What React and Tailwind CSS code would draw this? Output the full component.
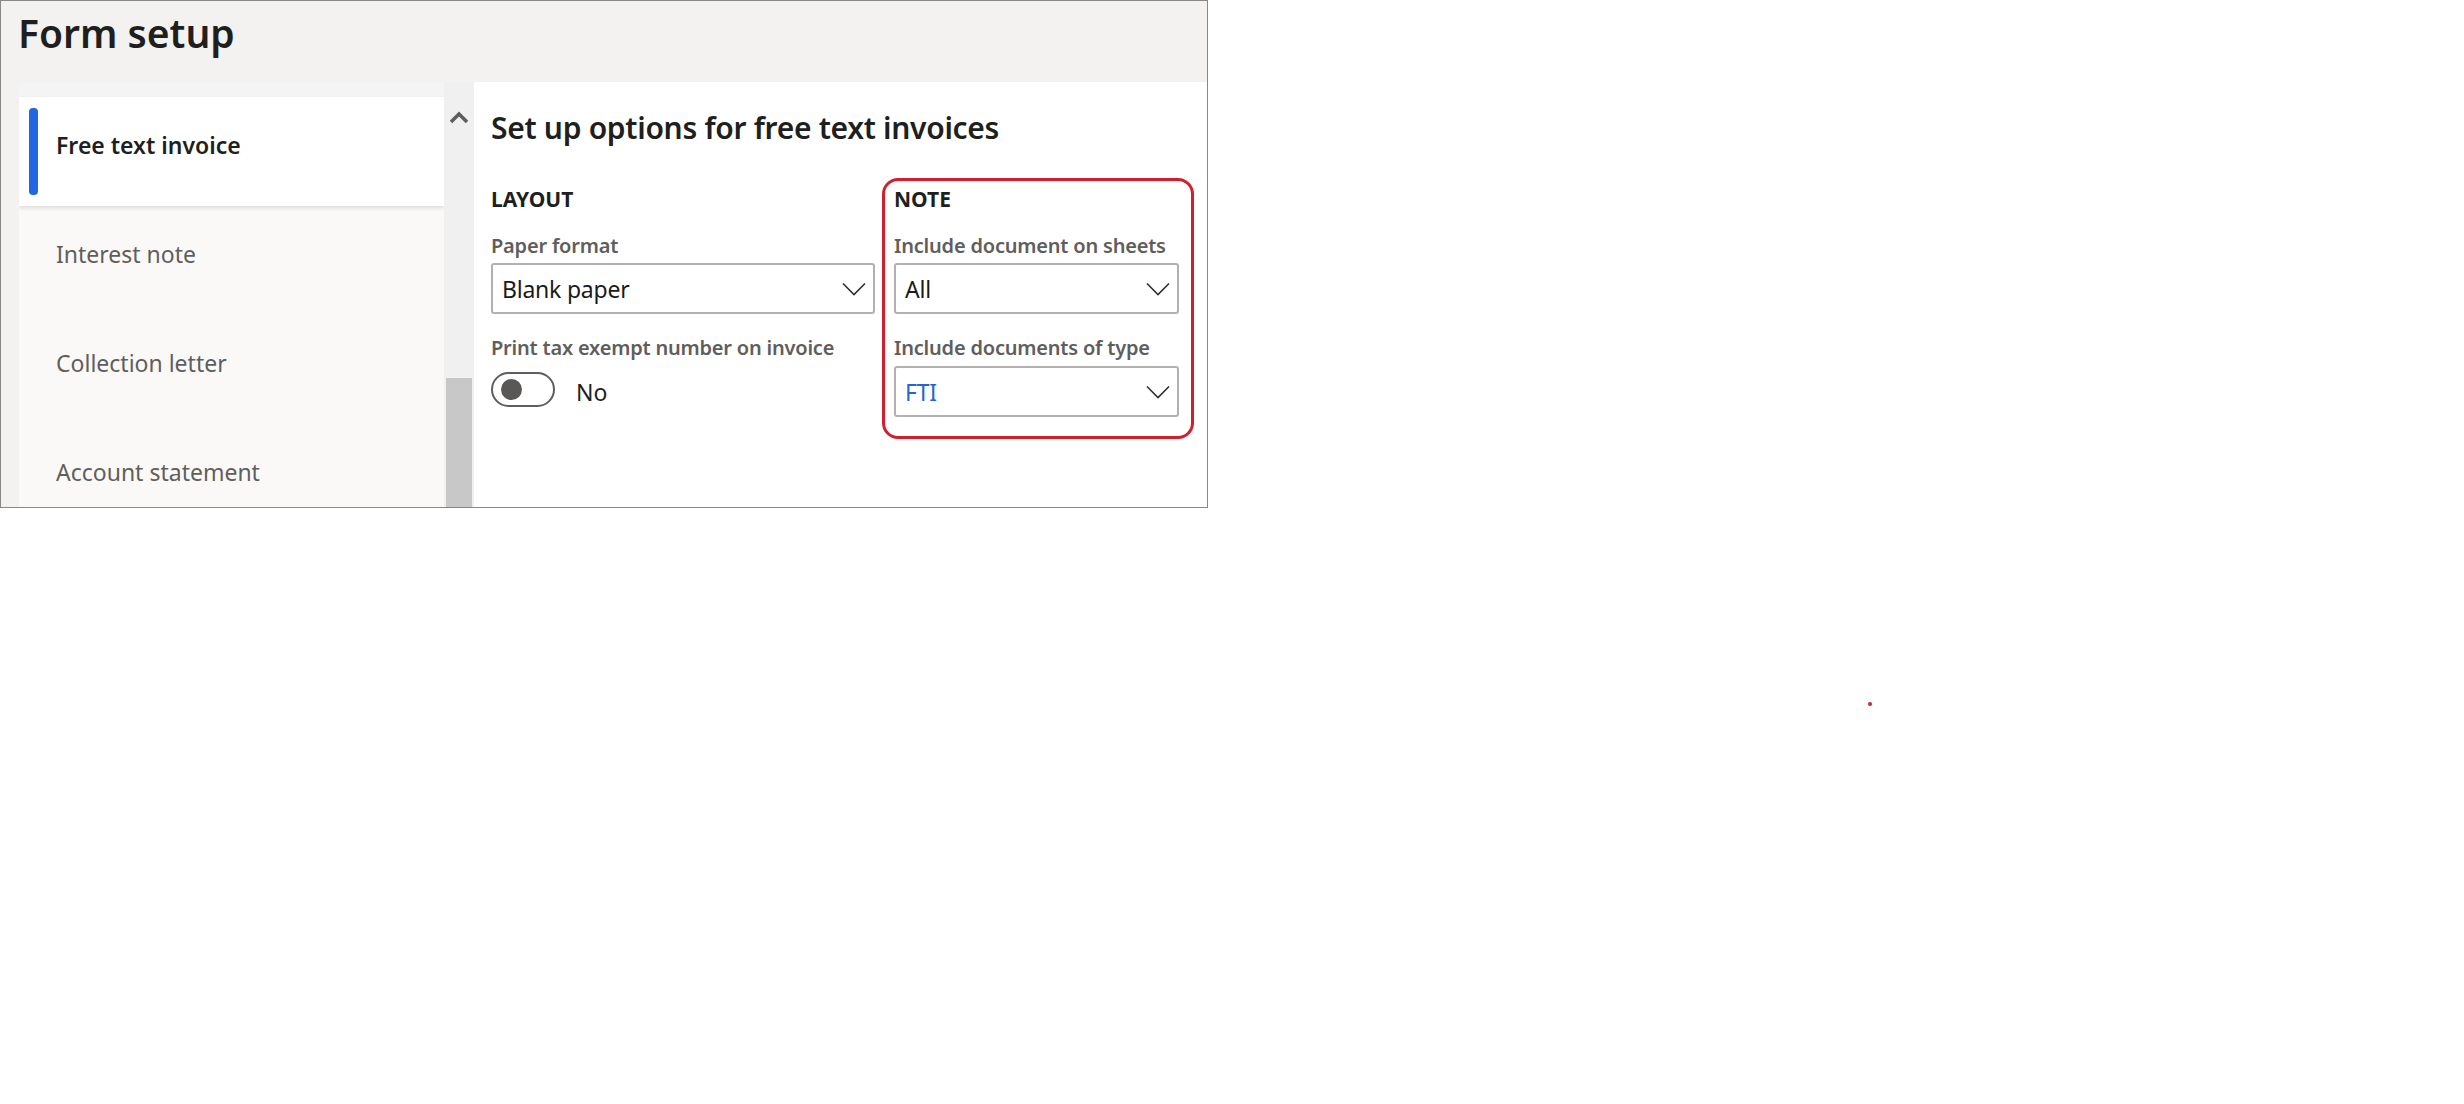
const font = { fontFamily: '"Segoe UI", "Noto Sans", "Open Sans", sans-serif' }

const navItems = ['Interest note', 'Collection letter', 'Account statement']

function Chevron() {
  return (
    <svg width="24" height="14" viewBox="0 0 24 14" fill="none" className="shrink-0">
      <polyline points="1,1.5 12,12.5 23,1.5" stroke="#323130" strokeWidth="1.6" />
    </svg>
  )
}

function Select({ value, blue }) {
  return (
    <div className="flex h-[51px] items-center justify-between rounded-[3px] border-2 border-[#b3b0ad] bg-white pl-[9px] pr-[7px]">
      <span className={`pt-[2px] text-[23px] tracking-[-0.01em] ${blue ? 'text-[#2266d0]' : 'text-[#1b1a19]'}`}>{value}</span>
      <Chevron />
    </div>
  )
}

export default function App() {
  return (
    <div className="relative h-[1104px] w-[2464px] bg-white" style={font}>
      <div className="flex h-[508px] w-[1208px] flex-col border border-[#8a8886] bg-[#f3f2f1]">
        <div className="h-[81px] shrink-0 pl-[17px] pt-[7px]">
          <h1 className="text-[39px] font-semibold leading-[50px] text-[#201f1e]">Form setup</h1>
        </div>
        <div className="flex min-h-0 flex-1 pl-[18px]">
          <div className="flex w-[425px] flex-col overflow-hidden bg-[#f4f4f4]">
            <div className="h-[15px] shrink-0" />
            <div className="relative z-10 flex h-[109px] shrink-0 items-center bg-white shadow-[0_2px_4px_rgba(0,0,0,0.12)]">
              <div className="ml-[10px] h-[87px] w-[9px] rounded-[4px] bg-[#2266e3]" />
              <span className="ml-[18px] pb-[12px] text-[23px] font-semibold text-[#201f1e]">Free text invoice</span>
            </div>
            <div className="flex-1 bg-[#faf9f8]">
              {navItems.map((item) => (
                <div key={item} className="flex h-[109px] items-center pb-[12px] pl-[37px] text-[23px] text-[#605e5c]">
                  {item}
                </div>
              ))}
            </div>
          </div>
          <div className="flex w-[30px] flex-col bg-[#f0f0f0]">
            <div className="flex justify-center pt-[26px]">
              <svg width="20" height="20" viewBox="0 0 20 20" fill="none">
                <polyline points="2,14 10,6 18,14" stroke="#605e5c" strokeWidth="3.6" />
              </svg>
            </div>
            <div className="mx-[2px] mt-[250px] flex-1 bg-[#c8c8c8]" />
          </div>
          <div className="flex-1 bg-white pl-[17px] pr-[12px] pt-[26px]">
            <h2 className="text-[30px] font-semibold leading-[40px] tracking-[-0.01em] text-[#201f1e]">Set up options for free text invoices</h2>
            <div className="mt-[30px] flex items-start gap-[7px]">
              <div className="w-[384px] pt-[8px]">
                <p className="mb-[21px] text-[21px] font-bold leading-[26px] text-[#201f1e]">LAYOUT</p>
                <p className="mb-[4px] text-[20px] font-semibold leading-[26px] tracking-[-0.01em] text-[#605e5c]">Paper format</p>
                <Select value="Blank paper" />
                <p className="mb-[11px] mt-[21px] text-[20px] font-semibold leading-[26px] tracking-[-0.01em] text-[#605e5c]">Print tax exempt number on invoice</p>
                <div className="flex items-center">
                  <div className="flex h-[35px] w-[64px] items-center rounded-full border-2 border-[#605e5c] pl-[8px]">
                    <div className="h-[21px] w-[21px] rounded-full bg-[#5a5857]" />
                  </div>
                  <span className="ml-[21px] translate-y-[3px] text-[23px] text-[#201f1e]">No</span>
                </div>
              </div>
              <div className="w-[312px] rounded-[16px] border-[3px] border-[#d0202e] pb-[19px] pl-[9px] pr-[12px] pt-[5px]">
                <p className="mb-[21px] text-[21px] font-bold leading-[26px] text-[#201f1e]">NOTE</p>
                <p className="mb-[4px] text-[20px] font-semibold leading-[26px] tracking-[-0.01em] text-[#605e5c]">Include document on sheets</p>
                <Select value="All" />
                <p className="mb-[5px] mt-[21px] text-[20px] font-semibold leading-[26px] tracking-[-0.01em] text-[#605e5c]">Include documents of type</p>
                <Select value="FTI" blue />
              </div>
            </div>
          </div>
        </div>
      </div>
      <div className="absolute left-[1868px] top-[702px] h-[4px] w-[4px] rounded-full bg-[#d0202e]" />
    </div>
  )
}
